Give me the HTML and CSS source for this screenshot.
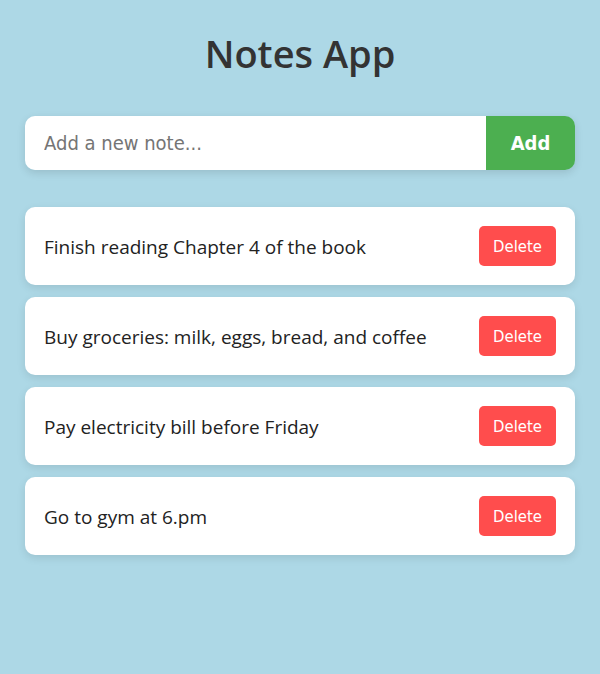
FILE: index.html
```html
<!DOCTYPE html>
<html lang="en">
<head>
<meta charset="utf-8">
<title>Notes App</title>
<link rel="stylesheet" href="styles.css">
</head>
<body>
<div class="app">
  <h1 class="title">Notes App</h1>
  <div class="input-row">
    <input class="note-input" type="text" placeholder="Add a new note...">
    <button class="add-btn">Add</button>
  </div>
  <ul class="notes">
    <li class="note"><span class="note-text">Finish reading Chapter 4 of the book</span><button class="del-btn">Delete</button></li>
    <li class="note"><span class="note-text">Buy groceries: milk, eggs, bread, and coffee</span><button class="del-btn">Delete</button></li>
    <li class="note"><span class="note-text">Pay electricity bill before Friday</span><button class="del-btn">Delete</button></li>
    <li class="note"><span class="note-text">Go to gym at 6.pm</span><button class="del-btn">Delete</button></li>
  </ul>
</div>
</body>
</html>
```
FILE: styles.css
```css
html, body {
  margin: 0;
  padding: 0;
}
body {
  background: #add8e6;
  font-family: "Open Sans", "Noto Sans", sans-serif;
  color: #222;
}
.app {
  padding: 20px 25px;
}
.title {
  margin: 3px 0 33px;
  text-align: center;
  font-size: 38px;
  font-weight: 600;
  color: #333;
  line-height: 60px;
}
.input-row {
  display: flex;
  height: 54px;
  border-radius: 10px;
  box-shadow: 0 3px 8px rgba(0, 0, 0, 0.12);
  overflow: hidden;
  margin-bottom: 37px;
}
.note-input {
  flex: 1;
  border: none;
  outline: none;
  padding: 0 19px;
  font-family: "DejaVu Sans Condensed", "DejaVu Sans", sans-serif;
  font-size: 20px;
  background: #fff;
  color: #333;
}
.note-input::placeholder {
  color: #757575;
}
.add-btn {
  width: 89px;
  border: none;
  background: #4caf50;
  color: #fff;
  font-family: "DejaVu Sans Condensed", "DejaVu Sans", sans-serif;
  font-weight: bold;
  font-size: 20px;
}
.notes {
  list-style: none;
  margin: 0;
  padding: 0;
  display: flex;
  flex-direction: column;
  gap: 12px;
}
.note {
  background: #fff;
  border-radius: 10px;
  padding: 19px;
  display: flex;
  align-items: center;
  justify-content: space-between;
  box-shadow: 0 3px 8px rgba(0, 0, 0, 0.1);
}
.note-text {
  font-size: 19px;
  color: #222;
  padding-top: 1px;
}
.del-btn {
  width: 77px;
  height: 40px;
  border: none;
  border-radius: 5px;
  background: #ff4d4d;
  color: #fff;
  font-family: "DejaVu Sans Condensed", "DejaVu Sans", sans-serif;
  font-size: 16.5px;
}
```
